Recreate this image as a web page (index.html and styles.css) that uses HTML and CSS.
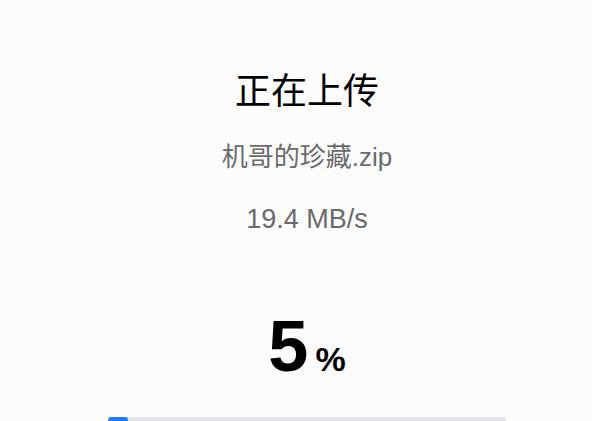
FILE: index.html
```html
<!DOCTYPE html>
<html lang="zh-CN">
<head>
    <meta charset="UTF-8">
    <meta name="viewport" content="width=device-width, initial-scale=1.0">
    <title>正在上传</title>
    <link rel="stylesheet" href="styles.css">
</head>
<body>
    <div class="upload">
        <h1 class="title">正在上传</h1>
        <div class="file-name">机哥的珍藏.zip</div>
        <div class="speed">19.4 MB/s</div>
        <div class="percent">
            <span class="percent-num">5</span>
            <span class="percent-sign">%</span>
        </div>
        <div class="progress">
            <div class="progress-fill" style="width: 5%"></div>
        </div>
    </div>
</body>
</html>
```

FILE: styles.css
```css
body {
    margin: 0;
    padding: 0;
    background-color: #fcfcfd;
    font-family: "Liberation Sans", "Noto Sans CJK SC", sans-serif;
    color: #000;
}
.upload {
    margin-left: 22px;
    padding-top: 66px;
    display: flex;
    flex-direction: column;
    align-items: center;
}
.title {
    margin: 0;
    font-family: "Noto Sans CJK SC", sans-serif;
    font-size: 36px;
    font-weight: 400;
    line-height: 44px;
    color: #000;
}
.file-name {
    margin-top: 31px;
    font-size: 26px;
    line-height: 32px;
    color: #6a6a6a;
}
.speed {
    margin-top: 30px;
    font-size: 27px;
    line-height: 32px;
    color: #6a6a6a;
}
.percent {
    margin-top: 76px;
    height: 70px;
    display: flex;
    align-items: baseline;
    font-weight: bold;
    line-height: 70px;
}
.percent-num {
    font-size: 72px;
}
.percent-sign {
    font-size: 34px;
    margin-left: 7px;
}
.progress {
    margin-top: 36px;
    width: 398px;
    height: 6px;
    border-radius: 3px;
    background-color: #e3e4e8;
    overflow: hidden;
}
.progress-fill {
    height: 100%;
    background-color: #1f7cf2;
    border-radius: 3px;
}
```
